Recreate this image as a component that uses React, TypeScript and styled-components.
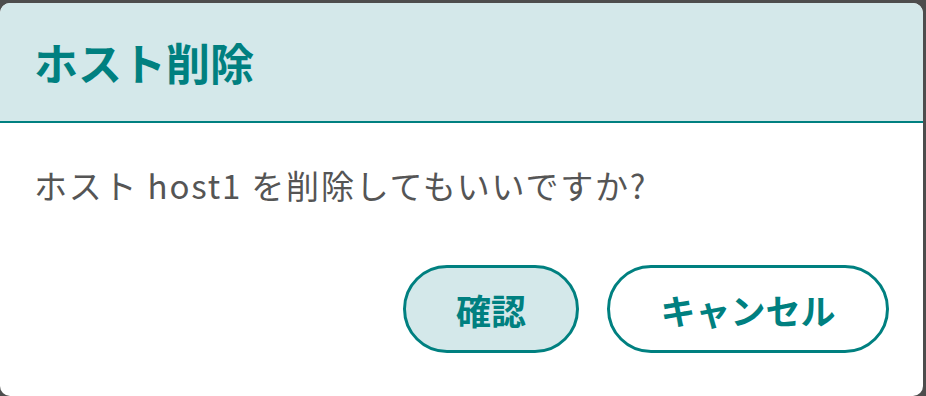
import styled, { createGlobalStyle } from "styled-components";

const GlobalStyle = createGlobalStyle`
  html, body {
    margin: 0;
    padding: 0;
    background-color: #4d4d4d;
    font-family: "Noto Sans CJK JP", "Noto Sans", sans-serif;
  }
  #root {
    padding-top: 3px;
    height: 393px;
  }
`;

const App = () => {
  return (
    <>
      <GlobalStyle />
      <Dialog>
        <Header>
          <Title>ホスト削除</Title>
        </Header>
        <Body>
          <Message>ホスト host1 を削除してもいいですか?</Message>
          <Actions>
            <ActionButton $primary $width={176}>
              確認
            </ActionButton>
            <ActionButton $width={282}>キャンセル</ActionButton>
          </Actions>
        </Body>
      </Dialog>
    </>
  );
};

const Dialog = styled.div`
  width: 923px;
  height: 393px;
  background-color: #ffffff;
  border-radius: 10px;
  overflow: hidden;
  display: flex;
  flex-direction: column;
`;

const Header = styled.div`
  height: 118px;
  background-color: #d4e8ea;
  border-bottom: 2px solid #008080;
  display: flex;
  align-items: center;
  padding: 0 34px;
`;

const Title = styled.h1`
  margin: 0;
  font-size: 44px;
  font-weight: 700;
  color: #008080;
  line-height: 1;
`;

const Body = styled.div`
  flex: 1;
  display: flex;
  flex-direction: column;
  padding: 43px 34px 43px 34px;
`;

const Message = styled.p`
  margin: 0;
  font-size: 33px;
  letter-spacing: 1.8px;
  line-height: 38px;
  color: #555555;
`;

const Actions = styled.div`
  margin-top: auto;
  display: flex;
  justify-content: flex-end;
  gap: 28px;
`;

const ActionButton = styled.button<{ $primary?: boolean; $width: number }>`
  width: ${(p) => p.$width}px;
  height: 88px;
  padding: 0;
  border: 3.5px solid #008080;
  border-radius: 44px;
  background-color: ${(p) => (p.$primary ? "#d4e8ea" : "#ffffff")};
  color: #008080;
  font-family: "Noto Sans CJK JP", "Noto Sans", sans-serif;
  font-size: 35px;
  font-weight: 700;
  cursor: pointer;
  box-sizing: border-box;
`;

export default App;
